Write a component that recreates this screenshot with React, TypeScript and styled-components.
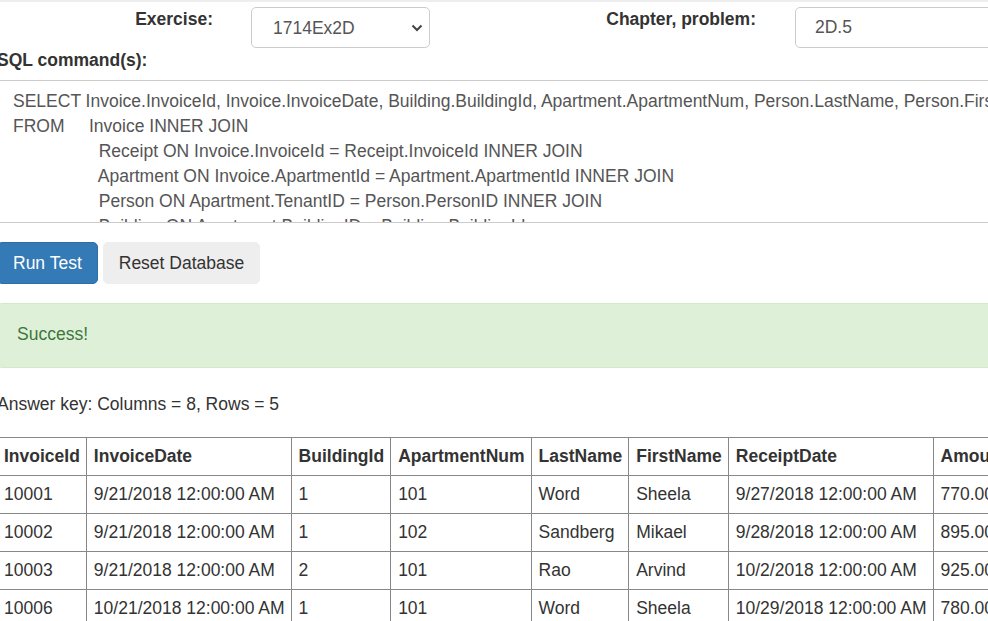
import React from "react";
import styled, { createGlobalStyle } from "styled-components";

const GlobalStyle = createGlobalStyle`
  html, body { margin: 0; padding: 0; background: #fff; overflow: hidden; }
  body {
    font-family: "Liberation Sans", Arial, sans-serif;
    font-size: 17.5px;
    line-height: 25px;
    color: #333;
  }
  * { box-sizing: border-box; }
`;

const TopBand = styled.div`
  height: 2px;
  background: #eee;
`;

const Page = styled.div`
  margin-left: -3px;
  width: 1120px;
`;

const FormRow = styled.div`
  display: flex;
  align-items: flex-start;
  padding-top: 5px;
`;

const FieldLabel = styled.label<{ $w: number }>`
  width: ${(p) => p.$w}px;
  text-align: right;
  font-weight: bold;
  flex: none;
`;

const SelectWrap = styled.div<{ $ml: number }>`
  position: relative;
  margin-left: ${(p) => p.$ml}px;
  flex: none;
`;

const Select = styled.select`
  appearance: none;
  -webkit-appearance: none;
  width: 179px;
  height: 41px;
  border: 1px solid #ccc;
  border-radius: 5px;
  background: #fff;
  padding: 0 0 0 21px;
  font-family: inherit;
  font-size: 17.5px;
  color: #555;
  display: block;
`;

const Chevron = styled.svg`
  position: absolute;
  right: 7px;
  top: 17px;
  pointer-events: none;
`;

const TextInput = styled.input<{ $ml: number }>`
  margin-left: ${(p) => p.$ml}px;
  width: 320px;
  height: 41px;
  border: 1px solid #ccc;
  border-radius: 5px;
  padding: 0 0 0 19px;
  font-family: inherit;
  font-size: 17.5px;
  color: #555;
  flex: none;
`;

const BlockLabel = styled.div`
  font-weight: bold;
`;

const SqlArea = styled.textarea`
  display: block;
  margin-top: 7px;
  width: 1120px;
  height: 143px;
  border: 1px solid #ccc;
  border-radius: 0;
  padding: 7.5px 15px;
  font-family: inherit;
  font-size: 17.5px;
  line-height: 25px;
  color: #555;
  resize: none;
  overflow: hidden;
  white-space: pre;
  tab-size: 38px;
`;

const ButtonRow = styled.div`
  display: flex;
  gap: 5px;
  margin-top: 19px;
`;

const Button = styled.button<{ $primary?: boolean }>`
  height: 42px;
  padding: 0 15px;
  border: 1px solid ${(p) => (p.$primary ? "#2e6da4" : "#eee")};
  border-radius: 5px;
  background: ${(p) => (p.$primary ? "#337ab7" : "#eee")};
  color: ${(p) => (p.$primary ? "#fff" : "#333")};
  font-family: inherit;
  font-size: 17.5px;
  line-height: 25px;
`;

const Alert = styled.div`
  margin-top: 19px;
  height: 65px;
  padding: 18px 19px 20px;
  background: #dff0d8;
  border: 1px solid #d6e9c6;
  border-radius: 5px;
  color: #3c763d;
`;

const AnswerKey = styled.div`
  margin-top: 24px;
`;

const Table = styled.table`
  margin-top: 20px;
  margin-left: -1px;
  border-collapse: collapse;
`;

const Th = styled.th`
  border: 1px solid #888;
  padding: 6px 6px 6px 7px;
  text-align: left;
  font-weight: bold;
  white-space: nowrap;
  line-height: 25px;
`;

const Td = styled.td`
  border: 1px solid #888;
  padding: 6px 6px 6px 7px;
  white-space: nowrap;
  line-height: 25px;
`;

const sql =
  "SELECT Invoice.InvoiceId, Invoice.InvoiceDate, Building.BuildingId, Apartment.ApartmentNum, Person.LastName, Person.FirstName, Receipt.ReceiptDate, Receipt.Amount\n" +
  "FROM\tInvoice INNER JOIN\n" +
  "\t\t  Receipt ON Invoice.InvoiceId = Receipt.InvoiceId INNER JOIN\n" +
  "\t\t  Apartment ON Invoice.ApartmentId = Apartment.ApartmentId INNER JOIN\n" +
  "\t\t  Person ON Apartment.TenantID = Person.PersonID INNER JOIN\n" +
  "\t\t  Building ON Apartment.BuildingID = Building.BuildingId";

const headers = [
  "InvoiceId",
  "InvoiceDate",
  "BuildingId",
  "ApartmentNum",
  "LastName",
  "FirstName",
  "ReceiptDate",
  "Amount",
];

const rows = [
  ["10001", "9/21/2018 12:00:00 AM", "1", "101", "Word", "Sheela", "9/27/2018 12:00:00 AM", "770.00"],
  ["10002", "9/21/2018 12:00:00 AM", "1", "102", "Sandberg", "Mikael", "9/28/2018 12:00:00 AM", "895.00"],
  ["10003", "9/21/2018 12:00:00 AM", "2", "101", "Rao", "Arvind", "10/2/2018 12:00:00 AM", "925.00"],
  ["10006", "10/21/2018 12:00:00 AM", "1", "101", "Word", "Sheela", "10/29/2018 12:00:00 AM", "780.00"],
  ["10007", "10/21/2018 12:00:00 AM", "1", "102", "Sandberg", "Mikael", "10/30/2018 12:00:00 AM", "895.00"],
];

export default function App() {
  return (
    <>
      <GlobalStyle />
      <TopBand />
      <Page>
        <FormRow>
          <FieldLabel $w={216}>Exercise:</FieldLabel>
          <SelectWrap $ml={38}>
            <Select defaultValue="1714Ex2D">
              <option value="1714Ex2D">1714Ex2D</option>
            </Select>
            <Chevron width="12" height="8" viewBox="0 0 12 8">
              <path d="M1.5 1.5 L6 6 L10.5 1.5" fill="none" stroke="#444" strokeWidth="2" />
            </Chevron>
          </SelectWrap>
          <FieldLabel $w={326}>Chapter, problem:</FieldLabel>
          <TextInput $ml={39} defaultValue="2D.5" />
        </FormRow>
        <BlockLabel>SQL command(s):</BlockLabel>
        <SqlArea defaultValue={sql} spellCheck={false} />
        <ButtonRow>
          <Button $primary>Run Test</Button>
          <Button>Reset Database</Button>
        </ButtonRow>
        <Alert>Success!</Alert>
        <AnswerKey>Answer key: Columns = 8, Rows = 5</AnswerKey>
        <Table>
          <thead>
            <tr>
              {headers.map((h) => (
                <Th key={h}>{h}</Th>
              ))}
            </tr>
          </thead>
          <tbody>
            {rows.map((r, i) => (
              <tr key={i}>
                {r.map((c, j) => (
                  <Td key={j}>{c}</Td>
                ))}
              </tr>
            ))}
          </tbody>
        </Table>
      </Page>
    </>
  );
}
